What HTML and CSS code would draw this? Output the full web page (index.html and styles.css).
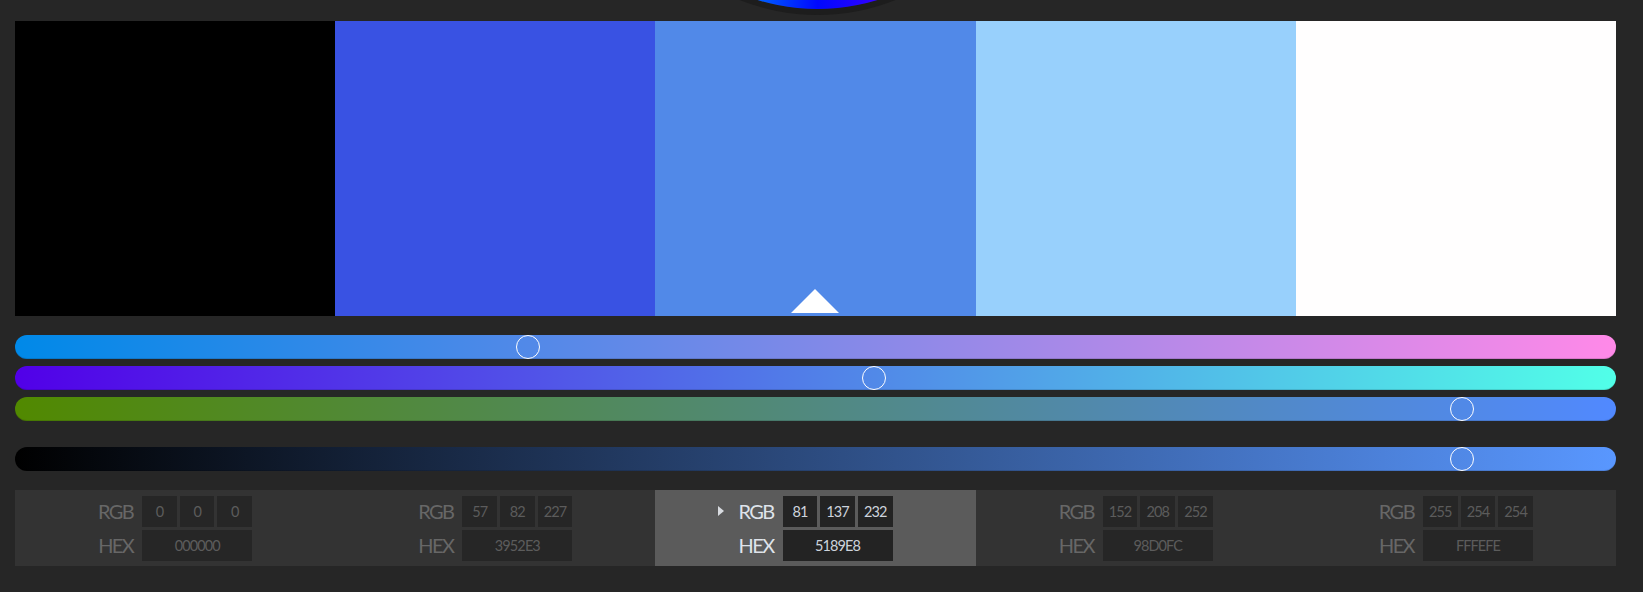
FILE: index.html
```html
<!DOCTYPE html>
<html lang="en">
<head>
<meta charset="utf-8">
<title>Color Theme</title>
<link rel="stylesheet" href="styles.css">
</head>
<body>
<div class="app">
  <div class="wheel-area">
    <div class="wheel"></div>
  </div>

  <div class="swatches">
    <div class="swatch sw1"></div>
    <div class="swatch sw2"></div>
    <div class="swatch sw3 active"><span class="marker"></span></div>
    <div class="swatch sw4"></div>
    <div class="swatch sw5"></div>
  </div>

  <div class="sliders">
    <div class="track tr-r"><span class="knob" style="--v:0.3176"></span></div>
    <div class="track tr-g"><span class="knob" style="--v:0.5373"></span></div>
    <div class="track tr-b"><span class="knob" style="--v:0.9098"></span></div>
    <div class="track tr-v"><span class="knob" style="--v:0.9098"></span></div>
  </div>

  <div class="panel">
    <div class="col">
      <div class="values">
        <span class="label">RGB</span>
        <div class="rgb"><span class="box">0</span><span class="box">0</span><span class="box">0</span></div>
        <span class="label">HEX</span>
        <span class="box hex">000000</span>
      </div>
    </div>
    <div class="col">
      <div class="values">
        <span class="label">RGB</span>
        <div class="rgb"><span class="box">57</span><span class="box">82</span><span class="box">227</span></div>
        <span class="label">HEX</span>
        <span class="box hex">3952E3</span>
      </div>
    </div>
    <div class="col selected">
      <div class="values">
        <span class="label rgb-label">RGB</span>
        <div class="rgb"><span class="box">81</span><span class="box">137</span><span class="box">232</span></div>
        <span class="label">HEX</span>
        <span class="box hex">5189E8</span>
      </div>
    </div>
    <div class="col">
      <div class="values">
        <span class="label">RGB</span>
        <div class="rgb"><span class="box">152</span><span class="box">208</span><span class="box">252</span></div>
        <span class="label">HEX</span>
        <span class="box hex">98D0FC</span>
      </div>
    </div>
    <div class="col">
      <div class="values">
        <span class="label">RGB</span>
        <div class="rgb"><span class="box">255</span><span class="box">254</span><span class="box">254</span></div>
        <span class="label">HEX</span>
        <span class="box hex">FFFEFE</span>
      </div>
    </div>
  </div>
</div>
</body>
</html>
```

FILE: styles.css
```css
* { box-sizing: border-box; }

html, body {
  margin: 0;
  background: #262626;
}

body {
  font-family: "Lato", "Liberation Sans", sans-serif;
  overflow: hidden;
}

.app {
  padding: 0 27px 0 15px;
}

.wheel-area {
  height: 21px;
  overflow: hidden;
  display: flex;
  justify-content: center;
  align-items: flex-end;
}

.wheel {
  flex: none;
  width: 409px;
  height: 409px;
  margin-bottom: 12px;
  margin-left: 3px;
  border-radius: 50%;
  background: conic-gradient(from 160deg, #3a00ff 0deg, #0008ff 20deg, #0070ff 40deg, #00a0ff 60deg);
  box-shadow: 0 0 0 6px #1d1d1d;
}

.swatches {
  display: grid;
  grid-template-columns: repeat(5, 1fr);
  height: 295px;
}

.swatch {
  position: relative;
  display: flex;
  justify-content: center;
  align-items: flex-end;
  padding-bottom: 3px;
}

.sw1 { background: #000000; }
.sw2 { background: #3952E3; }
.sw3 { background: #5189E8; }
.sw4 { background: #98D0FC; }
.sw5 { background: #FFFEFE; }

.marker {
  width: 0;
  height: 0;
  border-left: 24px solid transparent;
  border-right: 24px solid transparent;
  border-bottom: 24px solid #ffffff;
}

.sliders {
  margin-top: 19px;
  display: flex;
  flex-direction: column;
  gap: 7px;
}

.track {
  position: relative;
  height: 24px;
  border-radius: 12px;
  box-shadow: inset 0 -1px 0 rgba(0, 0, 0, 0.12);
}

.track.tr-v { margin-top: 19px; }

.tr-r { background: linear-gradient(90deg, rgb(0,137,232), rgb(255,137,232)); }
.tr-g { background: linear-gradient(90deg, rgb(81,0,232), rgb(81,255,232)); }
.tr-b { background: linear-gradient(90deg, rgb(81,137,0), rgb(81,137,255)); }
.tr-v { background: linear-gradient(90deg, rgb(0,0,0), rgb(89,151,255)); }

.knob {
  position: absolute;
  top: 0;
  left: calc(var(--v) * (100% - 24px));
  width: 24px;
  height: 24px;
  border-radius: 50%;
  border: 1.5px solid #ffffff;
}

.panel {
  margin-top: 19px;
  display: grid;
  grid-template-columns: repeat(5, 1fr);
  background: #333333;
  height: 76px;
}

.col {
  display: flex;
  justify-content: center;
  padding-top: 6px;
}

.col.selected { background: #5b5b5b; }

.values {
  display: grid;
  grid-template-columns: auto 110px;
  grid-template-rows: 31px 31px;
  column-gap: 9px;
  row-gap: 3px;
  align-items: center;
}

.label {
  position: relative;
  text-align: right;
  font-size: 20px;
  letter-spacing: -1.6px;
  color: #676767;
  line-height: 31px;
}

.rgb {
  display: grid;
  grid-template-columns: repeat(3, 1fr);
  gap: 3px;
  height: 31px;
}

.box {
  display: flex;
  align-items: center;
  justify-content: center;
  height: 31px;
  background: #262626;
  color: #5c5c5c;
  font-size: 14.5px;
  letter-spacing: -0.9px;
}

.selected .label { color: #dfe3ea; }
.selected .box { background: #232323; color: #cdd3dc; }

.rgb-label::before {
  content: "";
  position: absolute;
  right: calc(100% + 14px);
  top: 10px;
  border-top: 5.5px solid transparent;
  border-bottom: 5.5px solid transparent;
  border-left: 6px solid #d8dbe0;
}
```
